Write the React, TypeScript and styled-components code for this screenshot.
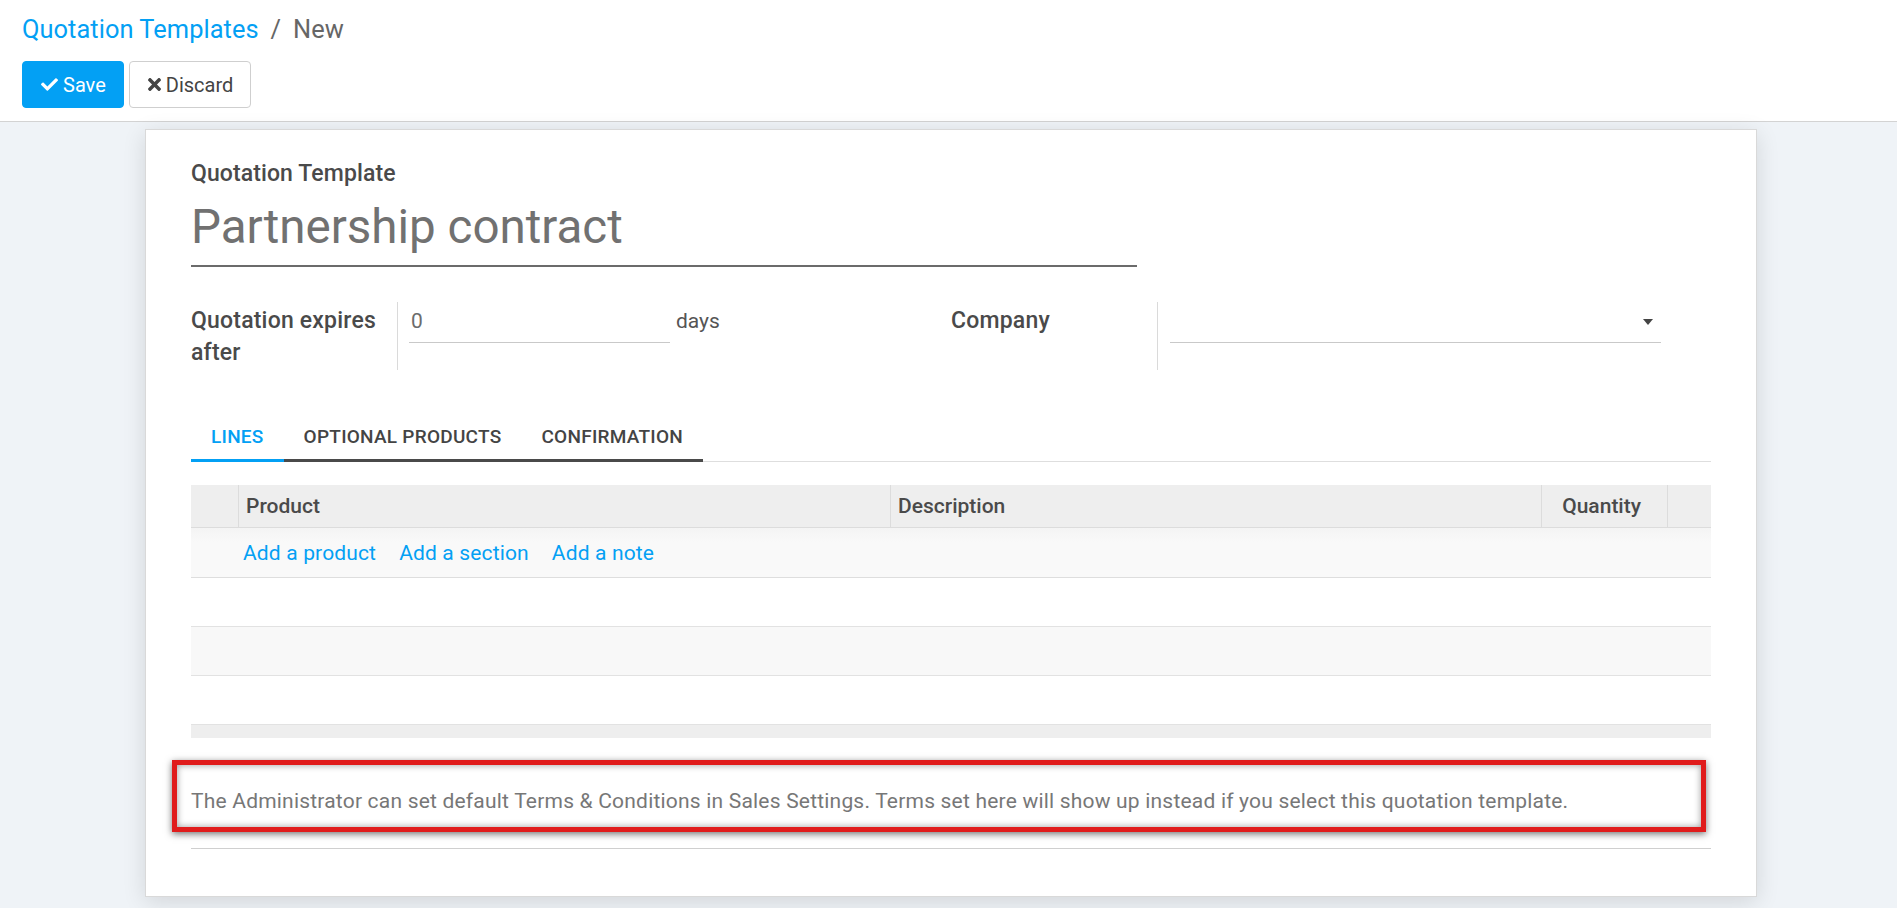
import React from "react";
import styled, { createGlobalStyle } from "styled-components";
import { FaCheck, FaTimes } from "react-icons/fa";

const BLUE = "#03a0f4";

const Global = createGlobalStyle`
  html, body { margin: 0; padding: 0; background: #eff3f7; }
  body { font-family: Roboto, "Liberation Sans", sans-serif; overflow: hidden; }
  * { box-sizing: border-box; }
`;

const Page = styled.div`
  min-height: 908px;
  background: #eff3f7;
`;

const TopBar = styled.header`
  background: #fff;
  border-bottom: 1px solid #d3d3d3;
  padding: 14px 22px 13px;
`;

const Breadcrumb = styled.div`
  display: flex;
  align-items: center;
  font-size: 25.4px;
  line-height: 30px;
  letter-spacing: 0.05px;
`;

const Crumb = styled.a`
  color: ${BLUE};
  text-decoration: none;
`;

const CrumbSep = styled.span`
  color: #666;
  margin: 0 12px;
`;

const Current = styled.span`
  color: #666;
`;

const ButtonRow = styled.div`
  display: flex;
  gap: 5px;
  margin-top: 17px;
`;

const Button = styled.button<{ $primary?: boolean }>`
  height: 47px;
  padding: 0 17px 0 18px;
  display: inline-flex;
  align-items: center;
  gap: 5px;
  font-family: inherit;
  font-size: 20px;
  border-radius: 4px;
  cursor: pointer;
  border: 1px solid ${(p) => (p.$primary ? BLUE : "#cfcfcf")};
  background: ${(p) => (p.$primary ? BLUE : "#fff")};
  color: ${(p) => (p.$primary ? "#fff" : "#444")};
  svg { flex-shrink: 0; }
`;

const CheckIcon = styled(FaCheck)`
  width: 17px;
  height: 17px;
`;

const TimesIcon = styled(FaTimes)`
  width: 13px;
  height: 19px;
`;

const Sheet = styled.main`
  margin: 7px 140px 0 145px;
  background: #fff;
  border: 1px solid #d9d9d9;
  box-shadow: 0 5px 22px rgba(0, 0, 0, 0.12);
  padding: 28px 45px 47px;
`;

const SmallLabel = styled.div`
  font-size: 23px;
  line-height: 32px;
  font-weight: 500;
  letter-spacing: 0.1px;
  color: #4a4a4a;
`;

const TitleField = styled.div`
  width: 946px;
  margin-top: 9px;
  font-size: 47.5px;
  line-height: 56px;
  color: #717171;
  padding-bottom: 10px;
  border-bottom: 2px solid #6b6b6b;
`;

const FieldsGrid = styled.div`
  display: grid;
  grid-template-columns: 1fr 1fr;
  margin-top: 35px;
`;

const FieldGroup = styled.div`
  display: flex;
  align-items: stretch;
`;

const FieldLabel = styled.div`
  width: 207px;
  flex-shrink: 0;
  min-height: 50px;
  padding: 3px 10px 1px 0;
  border-right: 1px solid #dadada;
  font-size: 23px;
  line-height: 32px;
  font-weight: 500;
  letter-spacing: 0.2px;
  color: #4a4a4a;
`;

const FieldValue = styled.div<{ $gap: number }>`
  display: flex;
  align-items: flex-start;
  padding: 3px 0 0 ${(p) => p.$gap}px;
`;

const Input = styled.div<{ $width: number }>`
  position: relative;
  width: ${(p) => p.$width}px;
  height: 38px;
  font-size: 21px;
  line-height: 32px;
  color: #6c6c6c;
  border-bottom: 1px solid #c9c9c9;
  padding: 0 2px;
`;

const Caret = styled.span`
  position: absolute;
  right: 8px;
  top: 14px;
  width: 0;
  height: 0;
  border-left: 5px solid transparent;
  border-right: 5px solid transparent;
  border-top: 6px solid #444;
`;

const Unit = styled.span`
  margin-left: 6px;
  font-size: 21px;
  line-height: 32px;
  color: #555;
`;

const TabNav = styled.nav`
  display: flex;
  margin-top: 42px;
  border-bottom: 1px solid #dedede;
`;

const Tab = styled.div<{ $active?: boolean }>`
  padding: 13px 20px 10px;
  margin-bottom: -1px;
  font-size: 19px;
  line-height: 24px;
  font-weight: 500;
  letter-spacing: 0.25px;
  text-transform: uppercase;
  color: ${(p) => (p.$active ? BLUE : "#444")};
  border-bottom: 3px solid ${(p) => (p.$active ? BLUE : "#4a4a4a")};
`;

const COLS = "47px 652px 651px 126px 44px";

const Table = styled.div`
  margin-top: 23px;
`;

const HeaderRow = styled.div`
  display: grid;
  grid-template-columns: ${COLS};
  height: 43px;
  background: #eeeeee;
  border-bottom: 1px solid #dcdcdc;
`;

const HeaderCell = styled.div<{ $right?: boolean; $first?: boolean }>`
  display: flex;
  align-items: center;
  justify-content: ${(p) => (p.$right ? "flex-end" : "flex-start")};
  padding: ${(p) => (p.$right ? "0 26px 0 8px" : "0 8px 0 7px")};
  border-left: ${(p) => (p.$first ? "none" : "1px solid #dcdcdc")};
  font-size: 21px;
  font-weight: 500;
  color: #4a4a4a;
`;

const AddRow = styled.div`
  display: grid;
  grid-template-columns: ${COLS};
  height: 50px;
  background: linear-gradient(#f4f4f4, #f9f9f9 30%);
  border-bottom: 1px solid #dedede;
`;

const AddLinks = styled.div`
  grid-column: 2 / span 3;
  display: flex;
  align-items: center;
  gap: 23px;
  padding-left: 5px;
`;

const Link = styled.a`
  font-size: 21px;
  letter-spacing: 0.15px;
  color: ${BLUE};
  text-decoration: none;
`;

const EmptyRow = styled.div<{ $striped?: boolean }>`
  height: 49px;
  background: ${(p) => (p.$striped ? "#f8f8f8" : "#fff")};
  border-bottom: 1px solid #e2e2e2;
`;

const TableFooter = styled.div`
  height: 13px;
  background: #eeeeee;
`;

const Note = styled.p`
  position: relative;
  margin: 48px 0 0;
  font-size: 21px;
  line-height: 30px;
  letter-spacing: 0.2px;
  color: #777;

  &::before {
    content: "";
    position: absolute;
    top: -26px;
    bottom: -16px;
    left: -19px;
    right: 5px;
    border: 5px solid #e01c1c;
    box-shadow: 0 2px 7px rgba(0, 0, 0, 0.55), inset 0 0 7px rgba(0, 0, 0, 0.4);
    pointer-events: none;
  }
`;

const Rule = styled.hr`
  margin: 32px 0 0;
  border: 0;
  border-top: 1px solid #cfcfcf;
`;

export default function App() {
  return (
    <Page>
      <Global />
      <TopBar>
        <Breadcrumb>
          <Crumb href="#">Quotation Templates</Crumb>
          <CrumbSep>/</CrumbSep>
          <Current>New</Current>
        </Breadcrumb>
        <ButtonRow>
          <Button $primary>
            <CheckIcon />
            Save
          </Button>
          <Button>
            <TimesIcon />
            Discard
          </Button>
        </ButtonRow>
      </TopBar>

      <Sheet>
        <SmallLabel>Quotation Template</SmallLabel>
        <TitleField>Partnership contract</TitleField>

        <FieldsGrid>
          <FieldGroup>
            <FieldLabel>Quotation expires after</FieldLabel>
            <FieldValue $gap={11}>
              <Input $width={261}>0</Input>
              <Unit>days</Unit>
            </FieldValue>
          </FieldGroup>
          <FieldGroup>
            <FieldLabel>Company</FieldLabel>
            <FieldValue $gap={12}>
              <Input $width={491}>
                <Caret />
              </Input>
            </FieldValue>
          </FieldGroup>
        </FieldsGrid>

        <TabNav>
          <Tab $active>Lines</Tab>
          <Tab>Optional Products</Tab>
          <Tab>Confirmation</Tab>
        </TabNav>

        <Table>
          <HeaderRow>
            <HeaderCell $first />
            <HeaderCell>Product</HeaderCell>
            <HeaderCell>Description</HeaderCell>
            <HeaderCell $right>Quantity</HeaderCell>
            <HeaderCell />
          </HeaderRow>
          <AddRow>
            <AddLinks>
              <Link href="#">Add a product</Link>
              <Link href="#">Add a section</Link>
              <Link href="#">Add a note</Link>
            </AddLinks>
          </AddRow>
          <EmptyRow />
          <EmptyRow $striped />
          <EmptyRow />
          <TableFooter />
        </Table>

        <Note>
          The Administrator can set default Terms &amp; Conditions in Sales Settings. Terms set here will show up
          instead if you select this quotation template.
        </Note>
        <Rule />
      </Sheet>
    </Page>
  );
}
